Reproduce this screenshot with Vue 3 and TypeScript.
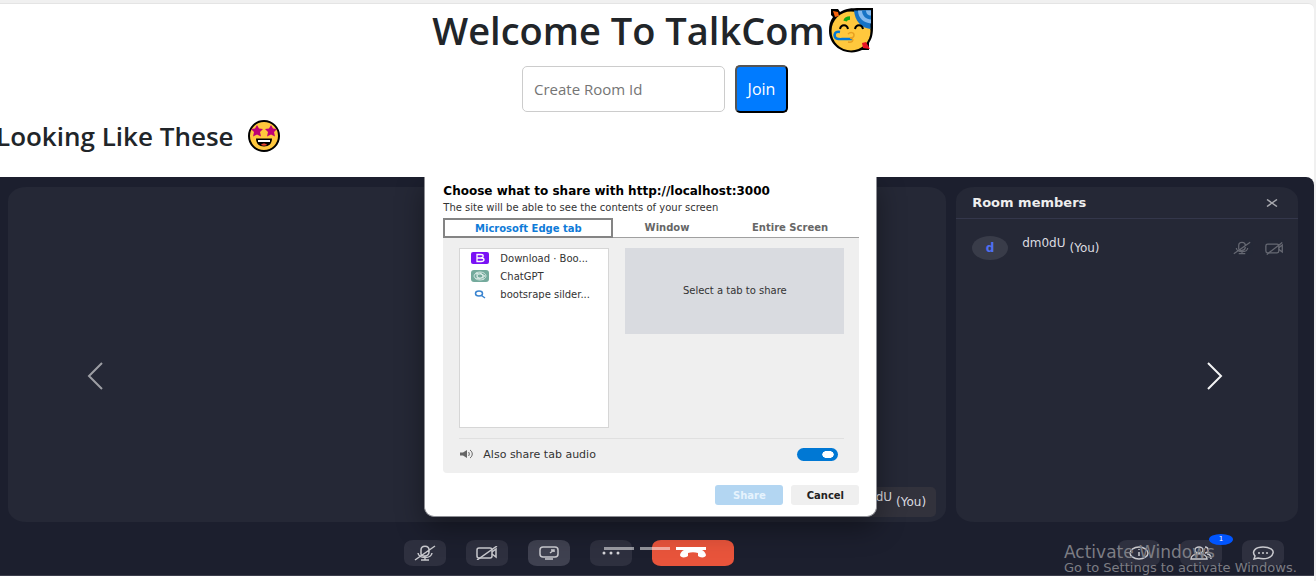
<script setup lang="ts">
import { ref } from 'vue'

const roomId = ref('')
const shareAudio = ref(true)
const activeTab = ref('Microsoft Edge tab')
const tabs = ['Microsoft Edge tab', 'Window', 'Entire Screen']
const slides = [0, 1, 2]
const activeSlide = ref(2)
</script>

<template>
  <div class="page">
    <main class="content">
      <h1 class="title">
        <span>Welcome To TalkCom</span>
        <svg class="party" viewBox="0 0 46 46" role="img" aria-label="Partying face">
          <path d="M3 2h7l2 3C19 0 28 1 45 1v20c0 8-2 12-4 15v7h-7C20 50 1 41 1 24c0-6 1-10 4-14L3 8z" fill="#000" />
          <circle cx="23" cy="24" r="19.5" fill="#ffc83d" />
          <path d="M26 3.500h16.500V22C33 21 27 14 26 3.500z" fill="#1673c5" />
          <path d="M30 3.500h13v13C36 16 30 11 30 3.500z" fill="#83b9ee" />
          <path d="M34 3.500h9v9c-5 0-9-4-9-9z" fill="#1673c5" />
          <path d="M38 3.500h5v5c-3 0-5-2-5-5z" fill="#83b9ee" />
          <path d="M5 4l5 1 1 4-4 1z" fill="#f7630c" />
          <path d="M34 36l4-1 4 7-7-1z" fill="#e81224" />
          <path d="M17 14c1-3 3-3 5-3" stroke="#16a815" stroke-width="3.500" fill="none" />
          <path d="M12 22c1-5 7-5 8 0M27 22c1-5 7-5 8 0" stroke="#000" stroke-width="2" fill="none" />
          <path d="M12 25c-5-1-6 2-5 5 1 3 6 2 9 2h8" stroke="#0078d7" stroke-width="2.500" fill="none" />
          <path d="M20 27c2-2 6-2 6 1 0 2-2 3-4 3 4 0 4 5-2 4" stroke="#e8a020" stroke-width="1.500" fill="none" />
        </svg>
      </h1>

      <form class="join" @submit.prevent>
        <input v-model="roomId" class="room" type="text" aria-label="Create Room Id" placeholder="Create Room Id" />
        <button class="join-btn" type="submit">Join</button>
      </form>

      <h2 class="subtitle">
        <span>Looking Like These</span>
        <svg class="star" viewBox="0 0 32 32" role="img" aria-label="Star-struck face">
          <circle cx="16" cy="16" r="15" fill="#ffc83d" stroke="#000" stroke-width="2" />
          <path d="M9 5l2 3.500 4 .5-3 3 1 4.500-4-2-4 2 1-4.500-3-3 4-.5z" fill="#bf0077" />
          <path d="M23 5l2 3.500 4 .5-3 3 1 4.500-4-2-4 2 1-4.500-3-3 4-.5z" fill="#bf0077" />
          <path d="M8 18.500h16c0 5-3 8-8 8s-8-3-8-8z" fill="#000" />
          <path d="M10 20h12v2H10z" fill="#fff" />
          <path d="M13 25c1-2 5-2 6 0-2 1-4 1-6 0z" fill="#e8432e" />
        </svg>
      </h2>

      <section class="carousel" aria-label="Preview">
        <div class="panels">
          <div class="stage">
            <div class="name-tag"><span class="raised">dm0dU</span><span>(You)</span></div>
          </div>
          <aside class="members">
            <header class="members-head">
              <span>Room members</span>
              <button class="icon-btn" type="button" aria-label="Close">
                <svg width="12" height="8" viewBox="0 0 12 8"><path d="M1 .5l10 7M11 .5l-10 7" /></svg>
              </button>
            </header>
            <div class="member">
              <span class="avatar">d</span>
              <span class="member-name"><span class="raised">dm0dU</span><span>(You)</span></span>
              <svg class="dim" width="18" height="14" viewBox="0 0 22 16"><path d="M7 9V5c0-5 8-5 8 0v2c0 5-8 5-8 2M4 8c1 6 13 6 14 0M11 12v3M7 15h8M1 15L21 1" /></svg>
              <svg class="dim" width="19" height="13" viewBox="0 0 22 14"><rect x="1" y="2" width="15" height="10" rx="2" /><path d="M16 6l4-3v8l-4-3M2 14L20 0" /></svg>
            </div>
          </aside>
        </div>

        <div class="controls">
          <button class="ctl" type="button" aria-label="Unmute">
            <svg width="22" height="16" viewBox="0 0 22 16"><path d="M7 9V5c0-5 8-5 8 0v2c0 5-8 5-8 2M4 8c1 6 13 6 14 0M11 12v3M7 15h8M1 15L21 1" /></svg>
          </button>
          <button class="ctl" type="button" aria-label="Start video">
            <svg width="22" height="14" viewBox="0 0 22 14"><rect x="1" y="2" width="15" height="10" rx="2" /><path d="M16 6l4-3v8l-4-3M1 14L21 0" /></svg>
          </button>
          <button class="ctl lit" type="button" aria-label="Share screen">
            <svg width="20" height="14" viewBox="0 0 20 14"><rect x="1" y="1" width="18" height="10" rx="3" /><path d="M6 13h8M11 7l4-3M12 4h3v2" /></svg>
          </button>
          <button class="ctl" type="button" aria-label="More">
            <svg class="solid" width="18" height="4" viewBox="0 0 18 4"><circle cx="2" cy="2" r="1.500" /><circle cx="9" cy="2" r="1.500" /><circle cx="16" cy="2" r="1.500" /></svg>
          </button>
          <button class="ctl leave" type="button" aria-label="Leave">
            <svg class="solid" width="28" height="10" viewBox="0 0 28 10"><path d="M1 7C2 2 8 0 14 0s12 2 13 7c0 3-6 3-8 1V5c-3-1-7-1-10 0v3c-2 2-8 2-8-1z" /></svg>
          </button>
          <span class="spacer"></span>
          <button class="ctl" type="button" aria-label="Information">
            <svg width="20" height="14" viewBox="0 0 20 14"><ellipse cx="10" cy="7" rx="9" ry="6" /><path d="M10 6v4M10 3v1" /></svg>
          </button>
          <button class="ctl" type="button" aria-label="Members">
            <svg width="22" height="14" viewBox="0 0 22 14"><ellipse cx="9" cy="4" rx="4" ry="3" /><path d="M1 13c0-7 16-7 16 0zM15 1c4 0 4 6 0 6M17 8c3 0 4 2 4 5" /></svg>
            <span class="badge">1</span>
          </button>
          <button class="ctl" type="button" aria-label="Chat">
            <svg width="22" height="14" viewBox="0 0 22 14"><path d="M2 13l1-3C-1 5 4 1 11 1s11 3 10 6c-1 5-8 7-15 5zM6 7h2M10 7h2M14 7h2" /></svg>
          </button>
        </div>

        <div class="dialog" role="dialog" aria-label="Choose what to share">
          <h3 class="dlg-title">Choose what to share with http://localhost:3000</h3>
          <p class="dlg-sub">The site will be able to see the contents of your screen</p>
          <div class="tabs">
            <button
              v-for="t in tabs"
              :key="t"
              type="button"
              :class="['tab', { on: t === activeTab }]"
              @click="activeTab = t"
            >{{ t }}</button>
          </div>
          <div class="body">
            <div class="choices">
              <ul class="list">
                <li>
                  <svg width="18" height="12" viewBox="0 0 18 12"><rect width="18" height="12" rx="2" fill="#7a11f5" /><path d="M6 2.500h4c3 0 3 3 0 3.500H6zM6 6h4c4 0 4 3.500 0 3.500H6z" fill="none" stroke="#fff" stroke-width="1.300" /></svg>
                  <span>Download · Boo...</span>
                </li>
                <li>
                  <svg width="18" height="12" viewBox="0 0 18 12"><rect width="18" height="12" rx="3" fill="#74aa9c" /><g fill="none" stroke="#e3f0ec" stroke-width=".8"><ellipse cx="9" cy="6" rx="6" ry="4" /><ellipse cx="9" cy="6" rx="3" ry="2" /><path d="M4 4l5-1 5 3M4 8l5 1 5-3M6 2v5l3 2M12 10V5L9 3" /></g></svg>
                  <span>ChatGPT</span>
                </li>
                <li>
                  <svg width="18" height="12" viewBox="0 0 18 12"><g fill="none" stroke="#3a84d0" stroke-width="1.500"><ellipse cx="8" cy="5.500" rx="3.500" ry="2.500" /><path d="M10.500 7.500L14 10" /></g></svg>
                  <span>bootsrape silder...</span>
                </li>
              </ul>
              <div class="preview">Select a tab to share</div>
            </div>
            <div class="audio">
              <svg width="14" height="10" viewBox="0 0 14 10"><path d="M1 3.500h3L8 1v8L4 6.500H1z" fill="#666" /><path d="M9.500 3c1 1 1 3 0 4M11 1c3 2 3 6 0 8" fill="none" stroke="#666" /></svg>
              <label for="share-audio">Also share tab audio</label>
              <input id="share-audio" v-model="shareAudio" class="toggle" type="checkbox" />
            </div>
          </div>
          <div class="actions">
            <button class="act share" type="button" disabled>Share</button>
            <button class="act" type="button">Cancel</button>
          </div>
        </div>

        <div class="indicators">
          <button
            v-for="s in slides"
            :key="s"
            type="button"
            :class="['bar', { on: s === activeSlide }]"
            :aria-label="`Slide ${s + 1}`"
            @click="activeSlide = s"
          ></button>
        </div>
        <button class="nav prev" type="button" aria-label="Previous">
          <svg width="16" height="28" viewBox="0 0 16 28"><path d="M15 1L2 14l13 13" /></svg>
        </button>
        <button class="nav next" type="button" aria-label="Next">
          <svg width="16" height="28" viewBox="0 0 16 28"><path d="M1 1l13 13L1 27" /></svg>
        </button>
        <div class="watermark">
          <div class="wm-big">Activate Windows</div>
          <div class="wm-small">Go to Settings to activate Windows.</div>
        </div>
      </section>
    </main>
  </div>
</template>

<style>
body {
  background: #fff;
}
</style>

<style scoped>
* {
  box-sizing: border-box;
}
.page {
  background: #f0f0f0;
  padding: 3px 2px 0 0;
  overflow: hidden;
  font-family: "Open Sans", "Noto Sans", sans-serif;
  color: #212529;
}
.content {
  margin-left: -4px;
  padding-bottom: 5px;
  background: #fff;
  border-top: 1px solid #e4e4e4;
  border-top-right-radius: 6px;
}
.title {
  display: flex;
  justify-content: center;
  align-items: center;
  gap: 3px;
  margin: 2px 4px 11px 0;
  font-size: 38px;
  font-weight: 600;
  line-height: 48px;
}
.party {
  width: 46px;
  height: 46px;
}
.join {
  display: flex;
  justify-content: center;
  align-items: center;
  gap: 10px;
}
.room {
  width: 203px;
  height: 46px;
  padding: 0 11px;
  border: 1px solid #ccc;
  border-radius: 5px;
  font: 15px "Open Sans", sans-serif;
  color: #212529;
}
.room::placeholder {
  color: #757575;
}
.join-btn {
  width: 53px;
  height: 48px;
  padding: 0;
  border: 2px solid;
  border-color: #555 #000 #000 #555;
  border-radius: 5px;
  background: #007bff;
  color: #fff;
  font: 16px "Open Sans", sans-serif;
}
.subtitle {
  display: flex;
  align-items: center;
  gap: 14px;
  margin: 6px 0 24px;
  font-size: 26px;
  font-weight: 600;
  line-height: 34px;
}
.star {
  width: 32px;
  height: 32px;
}
.carousel {
  position: relative;
  overflow: hidden;
  padding: 10px 16px 9px 12px;
  border-bottom: 1px solid #3b3d4b;
  border-top-right-radius: 8px;
  background: #1c1f2e;
  font: 10px "DejaVu Sans", sans-serif;
  color: #dcdce0;
}
.carousel button {
  font-family: inherit;
}
svg {
  flex: none;
}
.panels {
  display: flex;
  gap: 10px;
  height: 335px;
}
.stage,
.members {
  background: #252836;
  border-radius: 18px / 14px;
}
.stage {
  flex: 1;
  display: flex;
  justify-content: flex-end;
  align-items: flex-end;
  padding: 0 10px 5px;
}
.name-tag {
  display: flex;
  align-items: center;
  gap: 4px;
  height: 30px;
  padding: 0 10px;
  border-radius: 5px;
  background: #32323c;
  font-size: 12px;
}
.raised {
  padding-bottom: 10px;
}
.members {
  width: 26.5%;
}
.members-head {
  display: flex;
  justify-content: space-between;
  align-items: center;
  height: 32px;
  padding: 0 20px 0 16px;
  border-bottom: 1px solid #34374b;
  font-size: 13px;
  font-weight: bold;
  color: #eee;
}
.icon-btn {
  display: flex;
  padding: 0;
  border: 0;
  background: none;
}
.icon-btn svg,
.dim,
.ctl svg {
  fill: none;
  stroke: #a6a7ad;
  stroke-width: 1.5;
}
.member {
  display: flex;
  align-items: center;
  gap: 14px;
  padding: 17px 14px 0 16px;
}
.avatar {
  width: 36px;
  height: 24px;
  border-radius: 50%;
  background: #393c49;
  color: #4f6ff0;
  font-size: 12px;
  font-weight: bold;
  line-height: 24px;
  text-align: center;
}
.member-name {
  display: flex;
  flex: 1;
  align-items: center;
  gap: 4px;
  height: 24px;
  font-size: 12px;
}
.dim {
  opacity: 0.5;
}
.controls {
  display: flex;
  gap: 20px;
  margin-top: 18px;
  padding: 0 14px 0 30.7%;
}
.ctl {
  position: relative;
  display: flex;
  align-items: center;
  justify-content: center;
  width: 42px;
  height: 26px;
  padding: 0;
  border: 0;
  border-radius: 9px / 7px;
  background: #2e303f;
}
.ctl svg {
  stroke: #c9c9ce;
}
.lit {
  background: #3f4150;
}
.leave {
  width: 82px;
  background: #e8543b;
}
.ctl .solid {
  stroke: none;
  fill: #d4d4d8;
}
.leave .solid {
  fill: #fff;
}
.spacer {
  flex: 1;
}
.badge {
  position: absolute;
  top: -6px;
  right: -11px;
  width: 24px;
  height: 11px;
  border-radius: 50%;
  background: #0055ff;
  color: #fff;
  font-size: 7px;
  line-height: 11px;
  text-align: center;
}
.dialog {
  position: absolute;
  top: 0;
  left: 32.5%;
  width: 453px;
  padding: 6px 17px 11px 18px;
  border: 1px solid #8d8e94;
  border-top: 0;
  border-radius: 0 0 10px 10px;
  background: #fff;
  box-shadow: 0 10px 28px rgba(0, 0, 0, 0.4);
  color: #333;
}
.dlg-title {
  margin: 0;
  font-size: 12px;
  line-height: 16px;
  color: #000;
  white-space: nowrap;
}
.dlg-sub {
  margin: 0 0 2px;
  font-size: 10px;
  line-height: 17px;
  white-space: nowrap;
}
.tabs {
  display: flex;
  border-bottom: 1px solid #a0a0a0;
}
.tab {
  flex: 1 1 auto;
  height: 19px;
  padding: 0;
  border: 0;
  background: #fff;
  color: #666;
  font-size: 10px;
  font-weight: bold;
}
.tab.on {
  flex: 0 0 170px;
  height: 20px;
  margin-bottom: -1px;
  border: 2px solid #848484;
  color: #0f7bd8;
}
.body {
  padding: 10px 15px 0 16px;
  border-radius: 0 0 4px 4px;
  background: #efefef;
}
.choices {
  display: flex;
  align-items: flex-start;
  gap: 16px;
  padding-bottom: 10px;
  border-bottom: 1px solid #e0e0e0;
}
.list {
  width: 150px;
  height: 180px;
  margin: 0;
  padding: 0 0 0 11px;
  border: 1px solid #d6d6d6;
  background: #fff;
  list-style: none;
}
.list li {
  display: flex;
  align-items: center;
  gap: 11px;
  height: 18px;
  white-space: nowrap;
}
.preview {
  flex: 1;
  height: 86px;
  background: #d9dbe0;
  line-height: 86px;
  text-align: center;
}
.audio {
  display: flex;
  align-items: center;
  gap: 10px;
  height: 34px;
  padding: 0 6px 4px 0;
}
.audio label {
  flex: 1;
  font-size: 11px;
}
.toggle {
  appearance: none;
  width: 41px;
  height: 13px;
  margin: 0;
  border-radius: 10px;
  background: #0078d4;
}
.toggle:checked {
  background: radial-gradient(ellipse 6px 4px at 31px 50%, #fff 90%, #0078d4 100%);
}
.actions {
  display: flex;
  justify-content: flex-end;
  gap: 8px;
  margin-top: 12px;
}
.act {
  width: 68px;
  height: 20px;
  padding: 0;
  border: 0;
  border-radius: 3px;
  background: #efefef;
  color: #222;
  font-size: 10px;
  font-weight: bold;
}
.share {
  background: #b3d6f2;
  color: #e6f3fd;
}
.indicators {
  position: absolute;
  right: 0;
  bottom: 25px;
  left: 0;
  display: flex;
  justify-content: center;
  gap: 6px;
}
.bar {
  width: 30px;
  height: 3px;
  padding: 0;
  border: 0;
  background: #fff;
  opacity: 0.5;
}
.bar.on {
  opacity: 1;
}
.nav {
  position: absolute;
  top: 0;
  bottom: 0;
  display: flex;
  align-items: center;
  justify-content: center;
  width: 15%;
  padding: 0;
  border: 0;
  background: none;
  opacity: 0.55;
}
.nav svg {
  fill: none;
  stroke: #fff;
  stroke-width: 2;
}
.prev {
  left: 0;
}
.next {
  right: 0;
  opacity: 0.95;
}
.watermark {
  position: absolute;
  right: 13px;
  bottom: 0;
  color: #7c7d84;
  white-space: nowrap;
}
.wm-big {
  width: 237px;
  font-size: 17px;
  line-height: 17px;
}
.wm-small {
  font-size: 13px;
  line-height: 14px;
}
</style>
